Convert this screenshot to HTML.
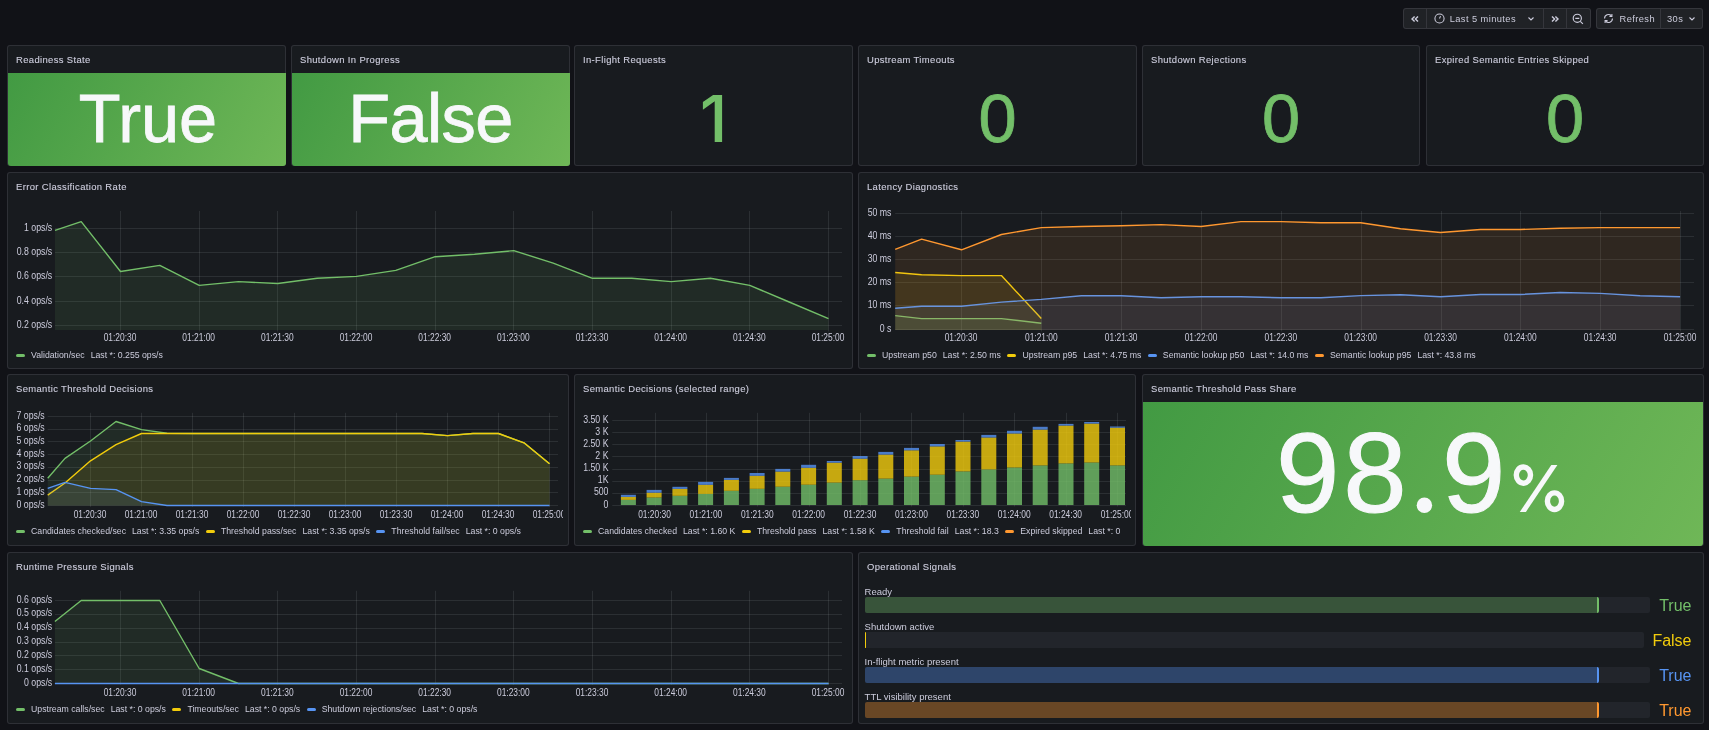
<!DOCTYPE html>
<html><head><meta charset="utf-8"><style>
*{box-sizing:border-box}
html,body{margin:0;padding:0;background:#111217;width:1709px;height:730px;overflow:hidden;font-family:"Liberation Sans", sans-serif}
.p{position:absolute;background:#181b1f;border:1px solid rgba(204,204,220,0.12);border-radius:3px}
.sbg{position:absolute;background:linear-gradient(120deg,#429a43,#6fb757);border-radius:0 0 3px 3px}
svg.ov{position:absolute;left:0;top:0;will-change:transform}
svg.ov text{font-family:"Liberation Sans", sans-serif}
.g{stroke:rgba(240,250,255,0.09);stroke-width:1}
.tt{font-size:9.45px;letter-spacing:0.36px;fill:#ccccdc;stroke:#ccccdc;stroke-width:0.12px}
.tk{font-size:8.6px;fill:#ccccdc}
.bv{font-size:68.5px;stroke-width:0.8px}
.bl{font-size:9.5px;fill:#ccccdc}
.gv{font-size:16px}
.lg{position:absolute;will-change:transform;display:flex;height:12px;align-items:center;font-size:8.72px;color:#ccccdc;white-space:nowrap}
.li{display:flex;align-items:center;margin-right:6.5px}
.li i{display:inline-block;width:9px;height:3px;border-radius:1.5px;margin-right:6px}
.lv{margin-left:6px}
.gb{position:absolute;background:#22252b;border-radius:2px}
.gf{position:absolute;border-radius:2px}
.bg1{position:absolute;will-change:transform;display:flex;background:#202226;border:1px solid rgba(204,204,220,0.12);border-radius:3px;color:#ccccdc;font-size:9.3px;letter-spacing:0.42px;overflow:hidden}
.seg{display:flex;align-items:center;justify-content:center;height:100%;flex:none}
.sep{border-left:1px solid rgba(204,204,220,0.12)}
</style></head>
<body>

<div class="bg1" style="left:1403.1px;top:8px;width:187.5px;height:21px">
  <div class="seg" style="width:22px"><svg width="10" height="10" viewBox="0 0 10 10"><path d="M4.6 2.4 L2 5 L4.6 7.6 M8 2.4 L5.4 5 L8 7.6" fill="none" stroke="#ccccdc" stroke-width="1.4"/></svg></div>
  <div class="seg sep" style="width:117.3px;justify-content:flex-start;padding-left:6.5px"><svg width="11" height="11" viewBox="0 0 12 12"><circle cx="6" cy="6" r="5" fill="none" stroke="#ccccdc" stroke-width="1.15"/><path d="M6 6 L7.1 3.4" stroke="#ccccdc" stroke-width="1.15"/></svg><span style="margin-left:5.2px">Last 5 minutes</span><svg style="margin-left:11px" width="8" height="6" viewBox="0 0 8 6"><path d="M1.5 1.5 L4 4 L6.5 1.5" fill="none" stroke="#ccccdc" stroke-width="1.1"/></svg></div>
  <div class="seg sep" style="width:22.6px"><svg width="10" height="10" viewBox="0 0 10 10"><path d="M2 2.4 L4.6 5 L2 7.6 M5.4 2.4 L8 5 L5.4 7.6" fill="none" stroke="#ccccdc" stroke-width="1.4"/></svg></div>
  <div class="seg sep" style="width:23.6px"><svg width="12" height="12" viewBox="0 0 12 12"><circle cx="5.3" cy="5.3" r="4.1" fill="none" stroke="#ccccdc" stroke-width="1.15"/><path d="M3.3 5.3 H7.3 M8.3 8.3 L10.9 10.9" stroke="#ccccdc" stroke-width="1.15"/></svg></div>
</div>
<div class="bg1" style="left:1596.2px;top:8px;width:106.6px;height:21px">
  <div class="seg" style="width:63px;justify-content:flex-start;padding-left:5.5px"><svg width="11" height="11" viewBox="0 0 12 12"><path d="M10.3 6 A4.3 4.3 0 0 1 2.9 9 M1.7 6 A4.3 4.3 0 0 1 9.1 3" fill="none" stroke="#ccccdc" stroke-width="1.2"/><path d="M9.7 1 V3.7 H7 M2.3 11 V8.3 H5" fill="none" stroke="#ccccdc" stroke-width="1.2"/></svg><span style="margin-left:6px">Refresh</span></div>
  <div class="seg sep" style="width:41.6px;justify-content:flex-start;padding-left:6px"><span>30s</span><svg style="margin-left:5px" width="8" height="6" viewBox="0 0 8 6"><path d="M1.5 1.5 L4 4 L6.5 1.5" fill="none" stroke="#ccccdc" stroke-width="1.1"/></svg></div>
</div>

<div class="p" style="left:7px;top:45px;width:279px;height:121px"></div><div class="sbg" style="left:7.5px;top:73px;width:278px;height:93px"></div><div class="p" style="left:291px;top:45px;width:279px;height:121px"></div><div class="sbg" style="left:291.5px;top:73px;width:278px;height:93px"></div><div class="p" style="left:574px;top:45px;width:279px;height:121px"></div><div class="p" style="left:858px;top:45px;width:279px;height:121px"></div><div class="p" style="left:1142px;top:45px;width:278px;height:121px"></div><div class="p" style="left:1426px;top:45px;width:278px;height:121px"></div><div class="p" style="left:7px;top:172px;width:846px;height:197px"></div><div class="p" style="left:858px;top:172px;width:846px;height:197px"></div><div class="lg" style="left:16px;top:348.6px"><span class="li"><i style="background:#73BF69"></i><span>Validation/sec</span><span class="lv">Last *: 0.255 ops/s</span></span></div><div class="lg" style="left:867px;top:348.6px"><span class="li"><i style="background:#73BF69"></i><span>Upstream p50</span><span class="lv">Last *: 2.50 ms</span></span><span class="li"><i style="background:#F2CC0C"></i><span>Upstream p95</span><span class="lv">Last *: 4.75 ms</span></span><span class="li"><i style="background:#5794F2"></i><span>Semantic lookup p50</span><span class="lv">Last *: 14.0 ms</span></span><span class="li"><i style="background:#FF9830"></i><span>Semantic lookup p95</span><span class="lv">Last *: 43.8 ms</span></span></div><div class="p" style="left:7px;top:374px;width:562px;height:172px"></div><div class="p" style="left:574px;top:374px;width:562px;height:172px"></div><div class="p" style="left:1142px;top:374px;width:562px;height:172px"></div><div class="lg" style="left:16px;top:525px"><span class="li"><i style="background:#73BF69"></i><span>Candidates checked/sec</span><span class="lv">Last *: 3.35 ops/s</span></span><span class="li"><i style="background:#F2CC0C"></i><span>Threshold pass/sec</span><span class="lv">Last *: 3.35 ops/s</span></span><span class="li"><i style="background:#5794F2"></i><span>Threshold fail/sec</span><span class="lv">Last *: 0 ops/s</span></span></div><div class="lg" style="left:583px;top:525px"><span class="li"><i style="background:#73BF69"></i><span>Candidates checked</span><span class="lv">Last *: 1.60 K</span></span><span class="li"><i style="background:#F2CC0C"></i><span>Threshold pass</span><span class="lv">Last *: 1.58 K</span></span><span class="li"><i style="background:#5794F2"></i><span>Threshold fail</span><span class="lv">Last *: 18.3</span></span><span class="li"><i style="background:#FF9830"></i><span>Expired skipped</span><span class="lv">Last *: 0</span></span></div><div class="sbg" style="left:1142.7px;top:402px;width:560.8px;height:144px"></div><div class="p" style="left:7px;top:552px;width:846px;height:172px"></div><div class="p" style="left:858px;top:552px;width:846px;height:172px"></div><div class="lg" style="left:16px;top:703px"><span class="li"><i style="background:#73BF69"></i><span>Upstream calls/sec</span><span class="lv">Last *: 0 ops/s</span></span><span class="li"><i style="background:#F2CC0C"></i><span>Timeouts/sec</span><span class="lv">Last *: 0 ops/s</span></span><span class="li"><i style="background:#5794F2"></i><span>Shutdown rejections/sec</span><span class="lv">Last *: 0 ops/s</span></span></div><div class="gb" style="left:865px;top:597.1px;width:784.5px;height:15.7px"></div><div class="gf" style="left:865px;top:597.1px;width:734px;height:15.7px;background:#38543a;border-right:2px solid #73BF69"></div><div class="gb" style="left:865px;top:632.2px;width:778.5px;height:15.7px"></div><div class="gf" style="left:865px;top:632.2px;width:0px;height:15.7px;border-left:1.5px solid #F2CC0C"></div><div class="gb" style="left:865px;top:667.3px;width:784.5px;height:15.7px"></div><div class="gf" style="left:865px;top:667.3px;width:734px;height:15.7px;background:#2e456a;border-right:2px solid #5794F2"></div><div class="gb" style="left:865px;top:702.4px;width:784.5px;height:15.7px"></div><div class="gf" style="left:865px;top:702.4px;width:734px;height:15.7px;background:#694725;border-right:2px solid #FF9830"></div>
<svg class="ov" width="1709" height="730" viewBox="0 0 1709 730">
<defs><clipPath id="sdclip"><rect x="574" y="374" width="557" height="172"/></clipPath><clipPath id="stdclip"><rect x="7" y="374" width="556" height="172"/></clipPath></defs>
<text class="tt" x="16" y="62.8">Readiness State</text><text class="bv" x="148.0" y="141.5" text-anchor="middle" fill="#f7f8fa" stroke="#f7f8fa" letter-spacing="0">True</text><text class="tt" x="300" y="62.8">Shutdown In Progress</text><text class="bv" x="430.5" y="141.5" text-anchor="middle" fill="#f7f8fa" stroke="#f7f8fa" letter-spacing="-0.6">False</text><text class="tt" x="583" y="62.8">In-Flight Requests</text><path d="M713.1 94.9 H722.1 V141.9 H714.7 V101.3 L702.9 109.7 V102 Z" fill="#73BF69"/><text class="tt" x="867" y="62.8">Upstream Timeouts</text><text class="bv" x="997.5" y="141.5" text-anchor="middle" fill="#73BF69" stroke="#73BF69">0</text><text class="tt" x="1151" y="62.8">Shutdown Rejections</text><text class="bv" x="1281.0" y="141.5" text-anchor="middle" fill="#73BF69" stroke="#73BF69">0</text><text class="tt" x="1435" y="62.8">Expired Semantic Entries Skipped</text><text class="bv" x="1565.0" y="141.5" text-anchor="middle" fill="#73BF69" stroke="#73BF69">0</text><text class="tt" x="16" y="189.8">Error Classification Rate</text><text class="tt" x="867" y="189.8">Latency Diagnostics</text><line x1="55" y1="325.5" x2="842" y2="325.5" class="g"/><line x1="55" y1="301.5" x2="842" y2="301.5" class="g"/><line x1="55" y1="276.5" x2="842" y2="276.5" class="g"/><line x1="55" y1="252.5" x2="842" y2="252.5" class="g"/><line x1="55" y1="228.5" x2="842" y2="228.5" class="g"/><line x1="120.5" y1="211" x2="120.5" y2="331.5" class="g"/><line x1="199.5" y1="211" x2="199.5" y2="331.5" class="g"/><line x1="277.5" y1="211" x2="277.5" y2="331.5" class="g"/><line x1="356.5" y1="211" x2="356.5" y2="331.5" class="g"/><line x1="435.5" y1="211" x2="435.5" y2="331.5" class="g"/><line x1="513.5" y1="211" x2="513.5" y2="331.5" class="g"/><line x1="592.5" y1="211" x2="592.5" y2="331.5" class="g"/><line x1="671.5" y1="211" x2="671.5" y2="331.5" class="g"/><line x1="749.5" y1="211" x2="749.5" y2="331.5" class="g"/><line x1="828.5" y1="211" x2="828.5" y2="331.5" class="g"/><text class="tk" transform="translate(52.2 327.5) scale(1.02 1.17)" text-anchor="end">0.2 ops/s</text><text class="tk" transform="translate(52.2 303.5) scale(1.02 1.17)" text-anchor="end">0.4 ops/s</text><text class="tk" transform="translate(52.2 278.5) scale(1.02 1.17)" text-anchor="end">0.6 ops/s</text><text class="tk" transform="translate(52.2 254.5) scale(1.02 1.17)" text-anchor="end">0.8 ops/s</text><text class="tk" transform="translate(52.2 230.5) scale(1.02 1.17)" text-anchor="end">1 ops/s</text><text class="tk" transform="translate(120.0 340.5) scale(0.98 1.17)" text-anchor="middle">01:20:30</text><text class="tk" transform="translate(198.67 340.5) scale(0.98 1.17)" text-anchor="middle">01:21:00</text><text class="tk" transform="translate(277.33 340.5) scale(0.98 1.17)" text-anchor="middle">01:21:30</text><text class="tk" transform="translate(356.0 340.5) scale(0.98 1.17)" text-anchor="middle">01:22:00</text><text class="tk" transform="translate(434.67 340.5) scale(0.98 1.17)" text-anchor="middle">01:22:30</text><text class="tk" transform="translate(513.33 340.5) scale(0.98 1.17)" text-anchor="middle">01:23:00</text><text class="tk" transform="translate(592.0 340.5) scale(0.98 1.17)" text-anchor="middle">01:23:30</text><text class="tk" transform="translate(670.67 340.5) scale(0.98 1.17)" text-anchor="middle">01:24:00</text><text class="tk" transform="translate(749.33 340.5) scale(0.98 1.17)" text-anchor="middle">01:24:30</text><text class="tk" transform="translate(828.0 340.5) scale(0.98 1.17)" text-anchor="middle">01:25:00</text><polygon points="55.0,230.4 81.2,221.6 120.5,271.5 159.8,265.4 199.2,285.4 238.5,281.6 277.8,283.5 317.2,278.3 356.5,276.4 395.8,270.4 435.2,256.7 474.5,254.2 513.8,250.6 553.2,263.2 592.5,278.3 631.8,278.3 671.2,281.6 710.5,278.3 749.8,285.4 789.2,302.0 828.5,318.6 828.5,330.0 55.0,330.0" fill="#73BF69" fill-opacity="0.1" stroke="none"/><polyline points="55.0,230.4 81.2,221.6 120.5,271.5 159.8,265.4 199.2,285.4 238.5,281.6 277.8,283.5 317.2,278.3 356.5,276.4 395.8,270.4 435.2,256.7 474.5,254.2 513.8,250.6 553.2,263.2 592.5,278.3 631.8,278.3 671.2,281.6 710.5,278.3 749.8,285.4 789.2,302.0 828.5,318.6" fill="none" stroke="#73BF69" stroke-width="1.4" stroke-linejoin="round"/><line x1="895.2" y1="329.5" x2="1694" y2="329.5" class="g"/><line x1="895.2" y1="305.5" x2="1694" y2="305.5" class="g"/><line x1="895.2" y1="282.5" x2="1694" y2="282.5" class="g"/><line x1="895.2" y1="259.5" x2="1694" y2="259.5" class="g"/><line x1="895.2" y1="236.5" x2="1694" y2="236.5" class="g"/><line x1="895.2" y1="213.5" x2="1694" y2="213.5" class="g"/><line x1="961.5" y1="211" x2="961.5" y2="331.5" class="g"/><line x1="1041.5" y1="211" x2="1041.5" y2="331.5" class="g"/><line x1="1121.5" y1="211" x2="1121.5" y2="331.5" class="g"/><line x1="1201.5" y1="211" x2="1201.5" y2="331.5" class="g"/><line x1="1281.5" y1="211" x2="1281.5" y2="331.5" class="g"/><line x1="1361.5" y1="211" x2="1361.5" y2="331.5" class="g"/><line x1="1441.5" y1="211" x2="1441.5" y2="331.5" class="g"/><line x1="1520.5" y1="211" x2="1520.5" y2="331.5" class="g"/><line x1="1600.5" y1="211" x2="1600.5" y2="331.5" class="g"/><line x1="1680.5" y1="211" x2="1680.5" y2="331.5" class="g"/><text class="tk" transform="translate(891.5 331.5) scale(1.02 1.17)" text-anchor="end">0 s</text><text class="tk" transform="translate(891.5 307.5) scale(1.02 1.17)" text-anchor="end">10 ms</text><text class="tk" transform="translate(891.5 284.5) scale(1.02 1.17)" text-anchor="end">20 ms</text><text class="tk" transform="translate(891.5 261.5) scale(1.02 1.17)" text-anchor="end">30 ms</text><text class="tk" transform="translate(891.5 238.5) scale(1.02 1.17)" text-anchor="end">40 ms</text><text class="tk" transform="translate(891.5 215.5) scale(1.02 1.17)" text-anchor="end">50 ms</text><text class="tk" transform="translate(961.0 340.5) scale(0.98 1.17)" text-anchor="middle">01:20:30</text><text class="tk" transform="translate(1041.33 340.5) scale(0.98 1.17)" text-anchor="middle">01:21:00</text><text class="tk" transform="translate(1121.17 340.5) scale(0.98 1.17)" text-anchor="middle">01:21:30</text><text class="tk" transform="translate(1201.0 340.5) scale(0.98 1.17)" text-anchor="middle">01:22:00</text><text class="tk" transform="translate(1280.83 340.5) scale(0.98 1.17)" text-anchor="middle">01:22:30</text><text class="tk" transform="translate(1360.67 340.5) scale(0.98 1.17)" text-anchor="middle">01:23:00</text><text class="tk" transform="translate(1440.5 340.5) scale(0.98 1.17)" text-anchor="middle">01:23:30</text><text class="tk" transform="translate(1520.33 340.5) scale(0.98 1.17)" text-anchor="middle">01:24:00</text><text class="tk" transform="translate(1600.17 340.5) scale(0.98 1.17)" text-anchor="middle">01:24:30</text><text class="tk" transform="translate(1680.0 340.5) scale(0.98 1.17)" text-anchor="middle">01:25:00</text><polygon points="895.2,315.6 921.6,318.6 961.5,318.6 1001.4,318.6 1041.3,323.2 1041.3,330.0 895.2,330.0" fill="#73BF69" fill-opacity="0.1" stroke="none"/><polyline points="895.2,315.6 921.6,318.6 961.5,318.6 1001.4,318.6 1041.3,323.2" fill="none" stroke="#73BF69" stroke-width="1.4" stroke-linejoin="round"/><polygon points="895.2,272.5 921.6,274.7 961.5,275.6 1001.4,275.6 1041.3,318.6 1041.3,330.0 895.2,330.0" fill="#F2CC0C" fill-opacity="0.1" stroke="none"/><polyline points="895.2,272.5 921.6,274.7 961.5,275.6 1001.4,275.6 1041.3,318.6" fill="none" stroke="#F2CC0C" stroke-width="1.4" stroke-linejoin="round"/><polygon points="895.2,308.2 921.6,306.2 961.5,306.2 1001.4,302.1 1041.3,299.4 1081.3,295.8 1121.2,295.8 1161.1,297.8 1201.0,296.7 1240.9,296.7 1280.9,297.8 1320.8,297.8 1360.7,295.6 1400.6,294.7 1440.5,296.7 1480.5,294.5 1520.4,294.5 1560.3,292.5 1600.2,293.4 1640.1,295.8 1680.1,296.7 1680.1,330.0 895.2,330.0" fill="#5794F2" fill-opacity="0.1" stroke="none"/><polyline points="895.2,308.2 921.6,306.2 961.5,306.2 1001.4,302.1 1041.3,299.4 1081.3,295.8 1121.2,295.8 1161.1,297.8 1201.0,296.7 1240.9,296.7 1280.9,297.8 1320.8,297.8 1360.7,295.6 1400.6,294.7 1440.5,296.7 1480.5,294.5 1520.4,294.5 1560.3,292.5 1600.2,293.4 1640.1,295.8 1680.1,296.7" fill="none" stroke="#5794F2" stroke-width="1.4" stroke-linejoin="round"/><polygon points="895.2,249.3 921.6,239.1 961.5,249.8 1001.4,234.5 1041.3,227.6 1081.3,226.5 1121.2,225.7 1161.1,224.6 1201.0,226.5 1240.9,221.6 1280.9,221.6 1320.8,222.7 1360.7,222.7 1400.6,228.7 1440.5,232.5 1480.5,229.5 1520.4,229.5 1560.3,228.2 1600.2,227.6 1640.1,227.6 1680.1,227.6 1680.1,330.0 895.2,330.0" fill="#FF9830" fill-opacity="0.1" stroke="none"/><polyline points="895.2,249.3 921.6,239.1 961.5,249.8 1001.4,234.5 1041.3,227.6 1081.3,226.5 1121.2,225.7 1161.1,224.6 1201.0,226.5 1240.9,221.6 1280.9,221.6 1320.8,222.7 1360.7,222.7 1400.6,228.7 1440.5,232.5 1480.5,229.5 1520.4,229.5 1560.3,228.2 1600.2,227.6 1640.1,227.6 1680.1,227.6" fill="none" stroke="#FF9830" stroke-width="1.4" stroke-linejoin="round"/><text class="tt" x="16" y="391.8">Semantic Threshold Decisions</text><text class="tt" x="583" y="391.8">Semantic Decisions (selected range)</text><text class="tt" x="1151" y="391.8">Semantic Threshold Pass Share</text><line x1="47.7" y1="505.5" x2="558" y2="505.5" class="g"/><line x1="47.7" y1="492.5" x2="558" y2="492.5" class="g"/><line x1="47.7" y1="480.5" x2="558" y2="480.5" class="g"/><line x1="47.7" y1="467.5" x2="558" y2="467.5" class="g"/><line x1="47.7" y1="454.5" x2="558" y2="454.5" class="g"/><line x1="47.7" y1="441.5" x2="558" y2="441.5" class="g"/><line x1="47.7" y1="429.5" x2="558" y2="429.5" class="g"/><line x1="47.7" y1="416.5" x2="558" y2="416.5" class="g"/><line x1="90.5" y1="412.8" x2="90.5" y2="506.9" class="g"/><line x1="141.5" y1="412.8" x2="141.5" y2="506.9" class="g"/><line x1="192.5" y1="412.8" x2="192.5" y2="506.9" class="g"/><line x1="243.5" y1="412.8" x2="243.5" y2="506.9" class="g"/><line x1="294.5" y1="412.8" x2="294.5" y2="506.9" class="g"/><line x1="345.5" y1="412.8" x2="345.5" y2="506.9" class="g"/><line x1="396.5" y1="412.8" x2="396.5" y2="506.9" class="g"/><line x1="447.5" y1="412.8" x2="447.5" y2="506.9" class="g"/><line x1="498.5" y1="412.8" x2="498.5" y2="506.9" class="g"/><line x1="549.5" y1="412.8" x2="549.5" y2="506.9" class="g"/><text class="tk" transform="translate(44.7 507.5) scale(1.02 1.17)" text-anchor="end">0 ops/s</text><text class="tk" transform="translate(44.7 494.79) scale(1.02 1.17)" text-anchor="end">1 ops/s</text><text class="tk" transform="translate(44.7 482.07) scale(1.02 1.17)" text-anchor="end">2 ops/s</text><text class="tk" transform="translate(44.7 469.36) scale(1.02 1.17)" text-anchor="end">3 ops/s</text><text class="tk" transform="translate(44.7 456.64) scale(1.02 1.17)" text-anchor="end">4 ops/s</text><text class="tk" transform="translate(44.7 443.93) scale(1.02 1.17)" text-anchor="end">5 ops/s</text><text class="tk" transform="translate(44.7 431.21) scale(1.02 1.17)" text-anchor="end">6 ops/s</text><text class="tk" transform="translate(44.7 418.5) scale(1.02 1.17)" text-anchor="end">7 ops/s</text><polygon points="47.7,478.3 65.0,458.4 90.5,441.0 116.0,421.5 141.5,429.6 167.0,433.3 192.5,433.5 218.0,433.5 243.5,433.5 269.0,433.5 294.5,433.5 320.0,433.5 345.5,433.5 371.0,433.5 396.5,433.5 422.0,433.5 447.5,435.6 473.0,433.5 498.5,433.5 524.0,442.8 549.5,463.7 549.5,505.4 47.7,505.4" fill="#73BF69" fill-opacity="0.1" stroke="none"/><polyline points="47.7,478.3 65.0,458.4 90.5,441.0 116.0,421.5 141.5,429.6 167.0,433.3 192.5,433.5 218.0,433.5 243.5,433.5 269.0,433.5 294.5,433.5 320.0,433.5 345.5,433.5 371.0,433.5 396.5,433.5 422.0,433.5 447.5,435.6 473.0,433.5 498.5,433.5 524.0,442.8 549.5,463.7" fill="none" stroke="#73BF69" stroke-width="1.4" stroke-linejoin="round"/><polygon points="47.7,495.1 65.0,483.0 90.5,460.8 116.0,444.7 141.5,433.5 167.0,433.5 192.5,433.5 218.0,433.5 243.5,433.5 269.0,433.5 294.5,433.5 320.0,433.5 345.5,433.5 371.0,433.5 396.5,433.5 422.0,433.5 447.5,435.6 473.0,433.5 498.5,433.5 524.0,442.8 549.5,463.7 549.5,505.4 47.7,505.4" fill="#F2CC0C" fill-opacity="0.1" stroke="none"/><polyline points="47.7,495.1 65.0,483.0 90.5,460.8 116.0,444.7 141.5,433.5 167.0,433.5 192.5,433.5 218.0,433.5 243.5,433.5 269.0,433.5 294.5,433.5 320.0,433.5 345.5,433.5 371.0,433.5 396.5,433.5 422.0,433.5 447.5,435.6 473.0,433.5 498.5,433.5 524.0,442.8 549.5,463.7" fill="none" stroke="#F2CC0C" stroke-width="1.4" stroke-linejoin="round"/><g clip-path="url(#stdclip)"><text class="tk" transform="translate(90.0 517.5) scale(0.98 1.17)" text-anchor="middle">01:20:30</text><text class="tk" transform="translate(141.0 517.5) scale(0.98 1.17)" text-anchor="middle">01:21:00</text><text class="tk" transform="translate(192.0 517.5) scale(0.98 1.17)" text-anchor="middle">01:21:30</text><text class="tk" transform="translate(243.0 517.5) scale(0.98 1.17)" text-anchor="middle">01:22:00</text><text class="tk" transform="translate(294.0 517.5) scale(0.98 1.17)" text-anchor="middle">01:22:30</text><text class="tk" transform="translate(345.0 517.5) scale(0.98 1.17)" text-anchor="middle">01:23:00</text><text class="tk" transform="translate(396.0 517.5) scale(0.98 1.17)" text-anchor="middle">01:23:30</text><text class="tk" transform="translate(447.0 517.5) scale(0.98 1.17)" text-anchor="middle">01:24:00</text><text class="tk" transform="translate(498.0 517.5) scale(0.98 1.17)" text-anchor="middle">01:24:30</text><text class="tk" transform="translate(549.0 517.5) scale(0.98 1.17)" text-anchor="middle">01:25:00</text></g><polygon points="47.7,488.4 65.0,482.4 90.5,488.4 116.0,489.6 141.5,501.6 167.0,505.5 192.5,505.5 218.0,505.5 243.5,505.5 269.0,505.5 294.5,505.5 320.0,505.5 345.5,505.5 371.0,505.5 396.5,505.5 422.0,505.5 447.5,505.5 473.0,505.5 498.5,505.5 524.0,505.5 549.5,505.5 549.5,505.4 47.7,505.4" fill="#5794F2" fill-opacity="0.1" stroke="none"/><polyline points="47.7,488.4 65.0,482.4 90.5,488.4 116.0,489.6 141.5,501.6 167.0,505.5 192.5,505.5 218.0,505.5 243.5,505.5 269.0,505.5 294.5,505.5 320.0,505.5 345.5,505.5 371.0,505.5 396.5,505.5 422.0,505.5 447.5,505.5 473.0,505.5 498.5,505.5 524.0,505.5 549.5,505.5" fill="none" stroke="#5794F2" stroke-width="1.4" stroke-linejoin="round"/><line x1="612.3" y1="505.5" x2="1126" y2="505.5" class="g"/><line x1="612.3" y1="493.5" x2="1126" y2="493.5" class="g"/><line x1="612.3" y1="481.5" x2="1126" y2="481.5" class="g"/><line x1="612.3" y1="469.5" x2="1126" y2="469.5" class="g"/><line x1="612.3" y1="456.5" x2="1126" y2="456.5" class="g"/><line x1="612.3" y1="444.5" x2="1126" y2="444.5" class="g"/><line x1="612.3" y1="432.5" x2="1126" y2="432.5" class="g"/><line x1="612.3" y1="420.5" x2="1126" y2="420.5" class="g"/><line x1="655.5" y1="412.8" x2="655.5" y2="506.5" class="g"/><line x1="706.5" y1="412.8" x2="706.5" y2="506.5" class="g"/><line x1="757.5" y1="412.8" x2="757.5" y2="506.5" class="g"/><line x1="809.5" y1="412.8" x2="809.5" y2="506.5" class="g"/><line x1="860.5" y1="412.8" x2="860.5" y2="506.5" class="g"/><line x1="911.5" y1="412.8" x2="911.5" y2="506.5" class="g"/><line x1="963.5" y1="412.8" x2="963.5" y2="506.5" class="g"/><line x1="1014.5" y1="412.8" x2="1014.5" y2="506.5" class="g"/><line x1="1066.5" y1="412.8" x2="1066.5" y2="506.5" class="g"/><line x1="1117.5" y1="412.8" x2="1117.5" y2="506.5" class="g"/><text class="tk" transform="translate(608.5 507.5) scale(1.02 1.17)" text-anchor="end">0</text><text class="tk" transform="translate(608.5 495.36) scale(1.02 1.17)" text-anchor="end">500</text><text class="tk" transform="translate(608.5 483.21) scale(1.02 1.17)" text-anchor="end">1K</text><text class="tk" transform="translate(608.5 471.07) scale(1.02 1.17)" text-anchor="end">1.50 K</text><text class="tk" transform="translate(608.5 458.93) scale(1.02 1.17)" text-anchor="end">2 K</text><text class="tk" transform="translate(608.5 446.79) scale(1.02 1.17)" text-anchor="end">2.50 K</text><text class="tk" transform="translate(608.5 434.64) scale(1.02 1.17)" text-anchor="end">3 K</text><text class="tk" transform="translate(608.5 422.5) scale(1.02 1.17)" text-anchor="end">3.50 K</text><rect x="620.9" y="499.9" width="15" height="5.1" fill="#73BF69" fill-opacity="0.8"/><rect x="620.9" y="496.9" width="15" height="3.0" fill="#F2CC0C" fill-opacity="0.8"/><rect x="620.9" y="494.8" width="15" height="2.1" fill="#5794F2" fill-opacity="0.8"/><rect x="646.6" y="497.5" width="15" height="7.5" fill="#73BF69" fill-opacity="0.8"/><rect x="646.6" y="492.7" width="15" height="4.8" fill="#F2CC0C" fill-opacity="0.8"/><rect x="646.6" y="489.9" width="15" height="2.8" fill="#5794F2" fill-opacity="0.8"/><rect x="672.4" y="495.8" width="15" height="9.2" fill="#73BF69" fill-opacity="0.8"/><rect x="672.4" y="488.9" width="15" height="6.9" fill="#F2CC0C" fill-opacity="0.8"/><rect x="672.4" y="486.8" width="15" height="2.1" fill="#5794F2" fill-opacity="0.8"/><rect x="698.1" y="493.9" width="15" height="11.1" fill="#73BF69" fill-opacity="0.8"/><rect x="698.1" y="484.8" width="15" height="9.1" fill="#F2CC0C" fill-opacity="0.8"/><rect x="698.1" y="481.9" width="15" height="2.9" fill="#5794F2" fill-opacity="0.8"/><rect x="723.9" y="490.8" width="15" height="14.2" fill="#73BF69" fill-opacity="0.8"/><rect x="723.9" y="479.9" width="15" height="10.9" fill="#F2CC0C" fill-opacity="0.8"/><rect x="723.9" y="477.9" width="15" height="2.0" fill="#5794F2" fill-opacity="0.8"/><rect x="749.6" y="488.8" width="15" height="16.2" fill="#73BF69" fill-opacity="0.8"/><rect x="749.6" y="475.8" width="15" height="13.0" fill="#F2CC0C" fill-opacity="0.8"/><rect x="749.6" y="473.0" width="15" height="2.8" fill="#5794F2" fill-opacity="0.8"/><rect x="775.3" y="486.7" width="15" height="18.3" fill="#73BF69" fill-opacity="0.8"/><rect x="775.3" y="471.6" width="15" height="15.1" fill="#F2CC0C" fill-opacity="0.8"/><rect x="775.3" y="468.9" width="15" height="2.7" fill="#5794F2" fill-opacity="0.8"/><rect x="801.1" y="484.7" width="15" height="20.3" fill="#73BF69" fill-opacity="0.8"/><rect x="801.1" y="467.8" width="15" height="16.9" fill="#F2CC0C" fill-opacity="0.8"/><rect x="801.1" y="464.8" width="15" height="3.0" fill="#5794F2" fill-opacity="0.8"/><rect x="826.8" y="482.6" width="15" height="22.4" fill="#73BF69" fill-opacity="0.8"/><rect x="826.8" y="462.7" width="15" height="19.9" fill="#F2CC0C" fill-opacity="0.8"/><rect x="826.8" y="461.0" width="15" height="1.7" fill="#5794F2" fill-opacity="0.8"/><rect x="852.6" y="480.2" width="15" height="24.8" fill="#73BF69" fill-opacity="0.8"/><rect x="852.6" y="458.7" width="15" height="21.5" fill="#F2CC0C" fill-opacity="0.8"/><rect x="852.6" y="456.0" width="15" height="2.7" fill="#5794F2" fill-opacity="0.8"/><rect x="878.3" y="478.6" width="15" height="26.4" fill="#73BF69" fill-opacity="0.8"/><rect x="878.3" y="454.6" width="15" height="24.0" fill="#F2CC0C" fill-opacity="0.8"/><rect x="878.3" y="451.9" width="15" height="2.7" fill="#5794F2" fill-opacity="0.8"/><rect x="904.0" y="476.6" width="15" height="28.4" fill="#73BF69" fill-opacity="0.8"/><rect x="904.0" y="450.3" width="15" height="26.3" fill="#F2CC0C" fill-opacity="0.8"/><rect x="904.0" y="447.9" width="15" height="2.4" fill="#5794F2" fill-opacity="0.8"/><rect x="929.8" y="474.7" width="15" height="30.3" fill="#73BF69" fill-opacity="0.8"/><rect x="929.8" y="446.4" width="15" height="28.3" fill="#F2CC0C" fill-opacity="0.8"/><rect x="929.8" y="444.0" width="15" height="2.4" fill="#5794F2" fill-opacity="0.8"/><rect x="955.5" y="471.4" width="15" height="33.6" fill="#73BF69" fill-opacity="0.8"/><rect x="955.5" y="441.6" width="15" height="29.8" fill="#F2CC0C" fill-opacity="0.8"/><rect x="955.5" y="440.0" width="15" height="1.6" fill="#5794F2" fill-opacity="0.8"/><rect x="981.3" y="469.4" width="15" height="35.6" fill="#73BF69" fill-opacity="0.8"/><rect x="981.3" y="437.5" width="15" height="31.9" fill="#F2CC0C" fill-opacity="0.8"/><rect x="981.3" y="434.9" width="15" height="2.6" fill="#5794F2" fill-opacity="0.8"/><rect x="1007.0" y="467.5" width="15" height="37.5" fill="#73BF69" fill-opacity="0.8"/><rect x="1007.0" y="433.5" width="15" height="34.0" fill="#F2CC0C" fill-opacity="0.8"/><rect x="1007.0" y="430.8" width="15" height="2.7" fill="#5794F2" fill-opacity="0.8"/><rect x="1032.7" y="465.4" width="15" height="39.6" fill="#73BF69" fill-opacity="0.8"/><rect x="1032.7" y="429.6" width="15" height="35.8" fill="#F2CC0C" fill-opacity="0.8"/><rect x="1032.7" y="426.8" width="15" height="2.8" fill="#5794F2" fill-opacity="0.8"/><rect x="1058.5" y="463.4" width="15" height="41.6" fill="#73BF69" fill-opacity="0.8"/><rect x="1058.5" y="425.6" width="15" height="37.8" fill="#F2CC0C" fill-opacity="0.8"/><rect x="1058.5" y="423.9" width="15" height="1.7" fill="#5794F2" fill-opacity="0.8"/><rect x="1084.2" y="462.5" width="15" height="42.5" fill="#73BF69" fill-opacity="0.8"/><rect x="1084.2" y="423.6" width="15" height="38.9" fill="#F2CC0C" fill-opacity="0.8"/><rect x="1084.2" y="422.0" width="15" height="1.6" fill="#5794F2" fill-opacity="0.8"/><rect x="1110.0" y="465.4" width="15" height="39.6" fill="#73BF69" fill-opacity="0.8"/><rect x="1110.0" y="427.7" width="15" height="37.7" fill="#F2CC0C" fill-opacity="0.8"/><rect x="1110.0" y="426.5" width="15" height="1.2" fill="#5794F2" fill-opacity="0.8"/><g clip-path="url(#sdclip)"><text class="tk" transform="translate(654.5 517.5) scale(0.98 1.17)" text-anchor="middle">01:20:30</text><text class="tk" transform="translate(705.89 517.5) scale(0.98 1.17)" text-anchor="middle">01:21:00</text><text class="tk" transform="translate(757.28 517.5) scale(0.98 1.17)" text-anchor="middle">01:21:30</text><text class="tk" transform="translate(808.67 517.5) scale(0.98 1.17)" text-anchor="middle">01:22:00</text><text class="tk" transform="translate(860.06 517.5) scale(0.98 1.17)" text-anchor="middle">01:22:30</text><text class="tk" transform="translate(911.44 517.5) scale(0.98 1.17)" text-anchor="middle">01:23:00</text><text class="tk" transform="translate(962.83 517.5) scale(0.98 1.17)" text-anchor="middle">01:23:30</text><text class="tk" transform="translate(1014.22 517.5) scale(0.98 1.17)" text-anchor="middle">01:24:00</text><text class="tk" transform="translate(1065.61 517.5) scale(0.98 1.17)" text-anchor="middle">01:24:30</text><text class="tk" transform="translate(1117.0 517.5) scale(0.98 1.17)" text-anchor="middle">01:25:00</text></g><text x="1276" y="512.3" fill="#f7f8fa" stroke="#f7f8fa" stroke-width="1.1" letter-spacing="3.8" style="font-size:114px">98</text><circle cx="1424.4" cy="505.2" r="7.7" fill="#f7f8fa"/><text x="1442" y="512.3" fill="#f7f8fa" stroke="#f7f8fa" stroke-width="1.1" style="font-size:114px">9</text><g fill="none" stroke="#f7f8fa" stroke-width="5.4"><ellipse cx="1523.4" cy="475.1" rx="7.1" ry="8.1"/><ellipse cx="1554.5" cy="501.2" rx="7.1" ry="8.3"/></g><path d="M1551.3 465 H1557.4 L1525.9 511.9 H1519.8 Z" fill="#f7f8fa"/><text class="tt" x="16" y="569.8">Runtime Pressure Signals</text><text class="tt" x="867" y="569.8">Operational Signals</text><line x1="54.9" y1="683.5" x2="842" y2="683.5" class="g"/><line x1="54.9" y1="669.5" x2="842" y2="669.5" class="g"/><line x1="54.9" y1="655.5" x2="842" y2="655.5" class="g"/><line x1="54.9" y1="642.5" x2="842" y2="642.5" class="g"/><line x1="54.9" y1="628.5" x2="842" y2="628.5" class="g"/><line x1="54.9" y1="614.5" x2="842" y2="614.5" class="g"/><line x1="54.9" y1="600.5" x2="842" y2="600.5" class="g"/><line x1="120.5" y1="590.8" x2="120.5" y2="684.9" class="g"/><line x1="199.5" y1="590.8" x2="199.5" y2="684.9" class="g"/><line x1="277.5" y1="590.8" x2="277.5" y2="684.9" class="g"/><line x1="356.5" y1="590.8" x2="356.5" y2="684.9" class="g"/><line x1="435.5" y1="590.8" x2="435.5" y2="684.9" class="g"/><line x1="513.5" y1="590.8" x2="513.5" y2="684.9" class="g"/><line x1="592.5" y1="590.8" x2="592.5" y2="684.9" class="g"/><line x1="671.5" y1="590.8" x2="671.5" y2="684.9" class="g"/><line x1="749.5" y1="590.8" x2="749.5" y2="684.9" class="g"/><line x1="828.5" y1="590.8" x2="828.5" y2="684.9" class="g"/><text class="tk" transform="translate(52.2 685.5) scale(1.02 1.17)" text-anchor="end">0 ops/s</text><text class="tk" transform="translate(52.2 671.67) scale(1.02 1.17)" text-anchor="end">0.1 ops/s</text><text class="tk" transform="translate(52.2 657.83) scale(1.02 1.17)" text-anchor="end">0.2 ops/s</text><text class="tk" transform="translate(52.2 644.0) scale(1.02 1.17)" text-anchor="end">0.3 ops/s</text><text class="tk" transform="translate(52.2 630.17) scale(1.02 1.17)" text-anchor="end">0.4 ops/s</text><text class="tk" transform="translate(52.2 616.33) scale(1.02 1.17)" text-anchor="end">0.5 ops/s</text><text class="tk" transform="translate(52.2 602.5) scale(1.02 1.17)" text-anchor="end">0.6 ops/s</text><text class="tk" transform="translate(120.0 695.5) scale(0.98 1.17)" text-anchor="middle">01:20:30</text><text class="tk" transform="translate(198.67 695.5) scale(0.98 1.17)" text-anchor="middle">01:21:00</text><text class="tk" transform="translate(277.33 695.5) scale(0.98 1.17)" text-anchor="middle">01:21:30</text><text class="tk" transform="translate(356.0 695.5) scale(0.98 1.17)" text-anchor="middle">01:22:00</text><text class="tk" transform="translate(434.67 695.5) scale(0.98 1.17)" text-anchor="middle">01:22:30</text><text class="tk" transform="translate(513.33 695.5) scale(0.98 1.17)" text-anchor="middle">01:23:00</text><text class="tk" transform="translate(592.0 695.5) scale(0.98 1.17)" text-anchor="middle">01:23:30</text><text class="tk" transform="translate(670.67 695.5) scale(0.98 1.17)" text-anchor="middle">01:24:00</text><text class="tk" transform="translate(749.33 695.5) scale(0.98 1.17)" text-anchor="middle">01:24:30</text><text class="tk" transform="translate(828.0 695.5) scale(0.98 1.17)" text-anchor="middle">01:25:00</text><polygon points="54.9,621.5 81.2,600.5 120.5,600.5 159.8,600.5 199.2,668.5 238.5,683.5 828.5,683.5 828.5,683.4 54.9,683.4" fill="#73BF69" fill-opacity="0.1" stroke="none"/><polyline points="54.9,621.5 81.2,600.5 120.5,600.5 159.8,600.5 199.2,668.5 238.5,683.5 828.5,683.5" fill="none" stroke="#73BF69" stroke-width="1.4" stroke-linejoin="round"/><polyline points="54.9,683.5 828.5,683.5" fill="none" stroke="#5794F2" stroke-width="1.4" stroke-linejoin="round"/><text class="bl" x="864.6" y="595.0">Ready</text><text class="gv" x="1691.5" y="610.75" text-anchor="end" fill="#73BF69">True</text><text class="bl" x="864.6" y="630.1">Shutdown active</text><text class="gv" x="1691.5" y="645.85" text-anchor="end" fill="#F2CC0C">False</text><text class="bl" x="864.6" y="665.2">In-flight metric present</text><text class="gv" x="1691.5" y="680.95" text-anchor="end" fill="#5794F2">True</text><text class="bl" x="864.6" y="700.3000000000001">TTL visibility present</text><text class="gv" x="1691.5" y="716.0500000000001" text-anchor="end" fill="#FF9830">True</text>
</svg>
</body></html>
